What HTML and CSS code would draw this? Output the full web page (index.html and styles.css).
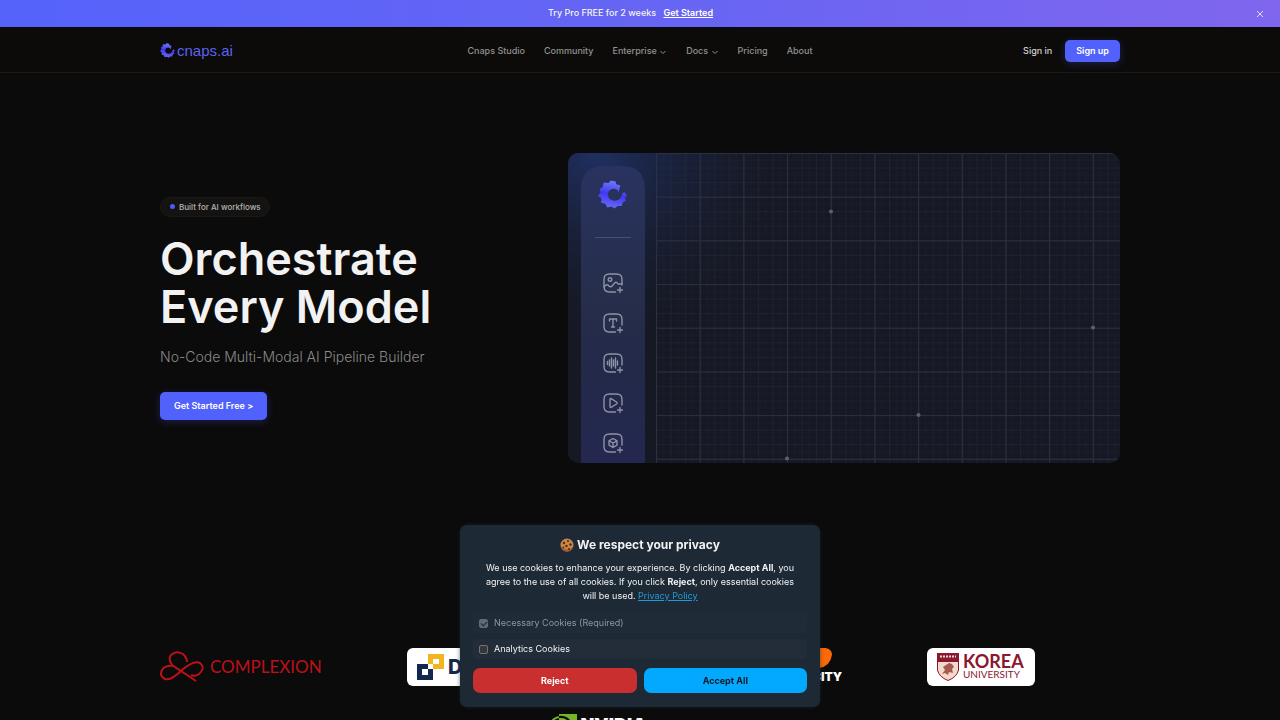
FILE: index.html
```html
<!DOCTYPE html>
<html lang="en">
<head>
    <meta charset="UTF-8">
    <meta name="viewport" content="width=device-width, initial-scale=1.0">
    <title>cnaps.ai</title>
    <link rel="stylesheet" href="styles.css">
</head>
<body>
    <!-- shared symbols -->
    <svg class="symbols" aria-hidden="true">
        <defs>
            <linearGradient id="swirl-fill" x1="0.6" y1="0" x2="0.4" y2="1">
                <stop offset="0" stop-color="#6e80f8"/>
                <stop offset="0.5" stop-color="#4038f0"/>
                <stop offset="1" stop-color="#6a6cf8"/>
            </linearGradient>
            <symbol id="swirl" viewBox="0 0 28 28">
                <path fill="url(#swirl-fill)" d="M20 12 L21.500 5 L17.500 4 L17 1.500 L12.500 .500 L10 3 L5.500 2.500 L4.500 7 L1.500 8.500 L2.500 12 L0 15 L3.500 18 L3 22 L7 23 L9 26.500 L13 25.500 L16 27.500 L19 25 L23 25 L24 21.500 L27 20 L26 17 L28 15 L25.500 11.500 L23.500 13 Q22.500 19.500 16.500 20 Q10 19.500 9.500 14 Q10 9 15 8.500 Q19 8.500 20 12 Z"/>
            </symbol>
            <symbol id="tile" viewBox="0 0 20 20">
                <path d="M19 12V6.500Q19 1 13.500 1H6.500Q1 1 1 6.500V13.500Q1 19 6.500 19H12.500M17 14.500V19.500M14.500 17H19.500"/>
            </symbol>
        </defs>
    </svg>

    <div class="banner">
        <p>Try Pro FREE for 2 weeks <a href="#">Get Started</a></p>
        <button class="banner-close" aria-label="Close">
            <svg viewBox="0 0 8 8"><path d="M1 1 7 7M7 1 1 7"/></svg>
        </button>
    </div>

    <header class="header">
        <div class="container header-inner">
            <a class="logo" href="#"><svg><use href="#swirl"/></svg>cnaps.ai</a>
            <nav class="nav">
                <a href="#">Cnaps Studio</a>
                <a href="#">Community</a>
                <a href="#">Enterprise <svg viewBox="0 0 8 8"><path d="M1.500 3 4 5.500 6.500 3"/></svg></a>
                <a href="#">Docs <svg viewBox="0 0 8 8"><path d="M1.500 3 4 5.500 6.500 3"/></svg></a>
                <a href="#">Pricing</a>
                <a href="#">About</a>
            </nav>
            <div class="account">
                <a class="sign-in" href="#">Sign in</a>
                <button class="button sign-up">Sign up</button>
            </div>
        </div>
    </header>

    <main>
        <section class="container hero">
            <div class="hero-text">
                <span class="badge">Built for AI workflows</span>
                <h1>Orchestrate<br>Every Model</h1>
                <p>No-Code Multi-Modal AI Pipeline Builder</p>
                <button class="button get-started">Get Started Free &gt;</button>
            </div>
            <svg class="studio" viewBox="0 0 552 310">
                <defs>
                    <radialGradient id="glow" gradientUnits="userSpaceOnUse" cx="30" cy="0" r="190">
                        <stop offset="0" stop-color="#203269" stop-opacity="0.9"/>
                        <stop offset="1" stop-color="#161a2a" stop-opacity="0"/>
                    </radialGradient>
                    <linearGradient id="rail" x1="0" y1="0" x2="0" y2="1">
                        <stop offset="0" stop-color="#29335f"/>
                        <stop offset="0.45" stop-color="#262e4b"/>
                        <stop offset="0.7" stop-color="#232949"/>
                        <stop offset="1" stop-color="#242850"/>
                    </linearGradient>
                    <pattern id="minor" x="88" y="0" width="14.560" height="14.560" patternUnits="userSpaceOnUse">
                        <path d="M.5 0V14.560M0 .5H14.560" stroke="#2b2f3e" stroke-opacity="0.4" fill="none"/>
                        <path d="M7.500 0V14.560M0 7.500H14.560" stroke="#2b2f3e" stroke-opacity="0.15" fill="none"/>
                    </pattern>
                    <pattern id="major" x="88" y="0" width="43.680" height="43.680" patternUnits="userSpaceOnUse">
                        <path d="M.5 0V43.680M0 .5H43.680" stroke="#2e3244" stroke-opacity="0.8" fill="none"/>
                    </pattern>
                </defs>
                <rect width="552" height="310" fill="#161924"/>
                <rect width="552" height="310" fill="url(#glow)"/>
                <rect x="88" width="464" height="310" fill="url(#minor)"/>
                <rect x="88" width="464" height="310" fill="url(#major)"/>
                <path d="M13 310V37Q13 13 36 13H54Q77 13 77 37V310Z" fill="url(#rail)"/>
                <use href="#swirl" x="30" y="27" width="29" height="29"/>
                <path d="M27 84.500H63" stroke="#475071"/>
                <g fill="none" stroke="#8d92a5" stroke-width="1.400" stroke-linecap="round" stroke-linejoin="round">
                    <svg x="35" y="120" width="20" height="20" viewBox="0 0 20 20"><use href="#tile"/><circle cx="7" cy="6.500" r="1.800"/><path d="M1 14 Q4 10 6 13 Q8 15 10 12 Q13 7 15 11 L19 11"/></svg>
                    <svg x="35" y="160" width="20" height="20" viewBox="0 0 20 20"><use href="#tile"/><path d="M6.500 8V6H13.500V8M10 6V14M8.500 14H11.500"/></svg>
                    <svg x="35" y="200" width="20" height="20" viewBox="0 0 20 20"><use href="#tile"/><path d="M4.500 8.500V11.500M6.500 7V13M8.500 5V15M10.500 7V13M12.500 5V15M14.500 8V12"/></svg>
                    <svg x="35" y="240" width="20" height="20" viewBox="0 0 20 20"><use href="#tile"/><path d="M7 6.500Q7 5 8.500 5.800L13.500 9Q14.800 10 13.500 11L8.500 14.200Q7 15 7 13.500Z"/></svg>
                    <svg x="35" y="280" width="20" height="20" viewBox="0 0 20 20"><use href="#tile"/><path d="M10 5.500 14 7.800V12.200L10 14.500 6 12.200V7.800ZM6 7.800 10 10 14 7.800M10 10V14.500"/></svg>
                </g>
                <g fill="#5c6070">
                    <circle cx="263" cy="58.500" r="2"/>
                    <circle cx="525" cy="174.500" r="2"/>
                    <circle cx="350.500" cy="262" r="2"/>
                    <circle cx="219" cy="305.500" r="2"/>
                </g>
            </svg>
        </section>

        <section class="container partners">
            <div class="partner complexion">
                <svg viewBox="0 0 44 32"><path d="M36 30 12 14Q8 8 11 4Q16-1 23 3Q27 7 27 11M22 19Q11 30 5 28Q-1 25 2 19Q5 14 14 15M22 19Q34 9 40 12Q46 17 39 23Q35 26 31 24"/></svg>
                COMPLEXION
            </div>
            <div class="partner card data">
                <svg viewBox="0 0 27 27"><path fill="#f3b51d" d="M11 0H27V15H11Z"/><path fill="#12294d" d="M0 10H16V26H0Z"/><path fill="#fff" d="M16 5H22V10H16ZM5 15H11V21H5ZM11 10H16V15H11Z"/></svg>
                D
            </div>
            <div class="partner city">
                <svg viewBox="0 0 36 24"><path fill="#fb6a05" d="M18 0Q36-2 36 8Q34 22 20 24Q8 22 4 10Z"/><circle cx="15" cy="12" r="6" fill="#d04400"/></svg>
                CITY
            </div>
            <div class="partner card korea">
                <svg viewBox="0 0 22 28"><path fill="#f3d9cc" stroke="#8c1730" d="M.5.5H21.500V17Q20 24 11 27.500Q2 24 .5 17Z"/><path fill="#8c1730" d="M0 0H22V9H0Z"/><path stroke="#efd6cd" stroke-width="2" stroke-dasharray="2 1" d="M3 3.500H19"/><path fill="#a65a50" d="M6 14 9 12 12 10 15 11 17 14 15 16 16 20 12 19 11 22 8 20 5 21 8 17Z"/></svg>
                <div><strong>KOREA</strong><span>UNIVERSITY</span></div>
            </div>
            <div class="partner nvidia">
                <svg viewBox="0 0 28 20"><path fill="#76b525" d="M10 0H28V20H10Z"/><path fill="none" stroke="#76b525" stroke-width="2" d="M10 3Q4 4 1 10Q4 16 10 18"/><path fill="none" stroke="#0a0a0a" stroke-width="2" d="M10 3Q18 2 22 9Q18 16 10 17"/></svg>
                NVIDIA
            </div>
        </section>
    </main>

    <div class="cookies" role="dialog" aria-labelledby="cookies-title">
        <h2 id="cookies-title"><svg viewBox="0 0 14 14"><circle cx="7" cy="7" r="6.500" fill="#c98645"/><path fill="#9f5e2c" d="M1 9Q7 14 13 9Q11 14 7 13.500Q3 14 1 9Z"/><g fill="#51291a"><circle cx="4" cy="5" r="1.200"/><circle cx="8" cy="3" r="1"/><circle cx="10.500" cy="6.500" r="1.200"/><circle cx="6.500" cy="8" r="1.200"/><circle cx="3.500" cy="9.500" r=".9"/><circle cx="9" cy="11" r="1"/></g></svg>We respect your privacy</h2>
        <p>We use cookies to enhance your experience. By clicking <strong>Accept All</strong>, you agree to the use of all cookies. If you click <strong>Reject</strong>, only essential cookies will be used. <a href="#">Privacy Policy</a></p>
        <label class="option disabled"><input type="checkbox" checked disabled>Necessary Cookies (Required)</label>
        <label class="option"><input type="checkbox">Analytics Cookies</label>
        <div class="cookies-actions">
            <button class="reject">Reject</button>
            <button class="accept">Accept All</button>
        </div>
    </div>
</body>
</html>
```
FILE: styles.css
```css
* {
    box-sizing: border-box;
}

body {
    margin: 0;
    background: #0b0b0b;
    color: #f2f2f2;
    font-family: Inter, sans-serif;
    font-size: 9px;
    line-height: 14px;
}

h1, h2, p {
    margin: 0;
}

button {
    border: none;
    cursor: pointer;
    font-family: inherit;
    font-size: inherit;
    line-height: inherit;
}

.symbols {
    position: absolute;
    width: 0;
    height: 0;
}

.container {
    max-width: 960px;
    margin: 0 auto;
}

/* Banner */
.banner {
    position: relative;
    height: 27px;
    padding-right: 19px;
    background: linear-gradient(90deg, #5563fb, #6665f4 50%, #8066ee);
    font-weight: 500;
    line-height: 26px;
    text-align: center;
}

.banner a {
    margin-left: 5px;
    color: #fff;
    font-weight: 600;
}

.banner-close {
    position: absolute;
    top: 8px;
    right: 14px;
    padding: 0;
    background: none;
}

.banner-close svg {
    display: block;
    width: 12px;
    height: 12px;
    padding: 2px;
    fill: none;
    stroke: #ddd9ff;
}

/* Header */
.header {
    background: #0c0b0a;
    border-bottom: 1px solid #1b1a19;
}

.header-inner {
    display: grid;
    grid-template-columns: 1fr auto 1fr;
    align-items: center;
    height: 45px;
    padding-top: 2px;
}

.header a {
    color: #92918f;
    font-weight: 500;
    text-decoration: none;
}

.header .logo {
    display: flex;
    align-items: center;
    gap: 2px;
    color: #5b63f0;
    font-family: "Liberation Sans", sans-serif;
    font-size: 15px;
    line-height: 20px;
}

.logo svg {
    width: 15px;
    height: 15px;
}

.nav {
    display: flex;
    gap: 19px;
}

.nav svg {
    width: 8px;
    height: 8px;
    vertical-align: -2px;
    fill: none;
    stroke: currentColor;
}

.account {
    display: flex;
    justify-content: flex-end;
    align-items: center;
    gap: 13px;
}

.header .sign-in {
    color: #d2d2d2;
}

.button {
    border-radius: 5px;
    background: #5161fc;
    color: #fff;
    font-weight: 600;
    box-shadow: 0 2px 8px rgba(81, 97, 252, 0.25);
}

.sign-up {
    padding: 4px 11px;
}

/* Hero */
.hero {
    display: grid;
    grid-template-columns: 2fr 3fr;
    gap: 40px;
    align-items: center;
    padding: 80px 0;
}

.badge {
    display: inline-flex;
    align-items: center;
    gap: 4px;
    height: 20px;
    padding: 0 8px 0 9px;
    border: 1px solid #1a1918;
    border-radius: 10px;
    background: #141312;
    color: #b4b3b1;
    font-size: 8px;
    font-weight: 500;
}

.badge::before {
    content: "";
    width: 5px;
    height: 5px;
    border-radius: 50%;
    background: #4a5cf8;
}

h1 {
    margin-top: 18px;
    font-size: 45px;
    font-weight: 600;
    line-height: 48px;
    white-space: nowrap;
}

.hero-text p {
    margin: 15px 0 24px;
    color: #8a8987;
    font-size: 14px;
    font-weight: 300;
    line-height: 22px;
    white-space: nowrap;
}

.get-started {
    padding: 7px 14px;
}

.studio {
    display: block;
    width: 100%;
    border-radius: 10px;
}

/* Partners */
.partners {
    display: flex;
    flex-wrap: wrap;
    justify-content: center;
    row-gap: 28px;
    padding: 105px 0 40px;
}

.partner {
    display: flex;
    align-items: center;
    height: 38px;
    margin-right: 85px;
}

.card {
    border-radius: 6px;
    background: #fff;
}

.complexion {
    gap: 6px;
    width: 162px;
    color: #bd1018;
    font-family: Lato, sans-serif;
    font-size: 17px;
}

.complexion svg {
    width: 44px;
    height: 32px;
    fill: none;
    stroke: #bd1018;
    stroke-width: 2;
}

.data {
    gap: 4px;
    width: 180px;
    padding-left: 10px;
    color: #12294d;
    font-size: 20px;
    font-weight: 800;
}

.data svg {
    width: 27px;
    height: 27px;
}

.city {
    flex-direction: column;
    align-items: flex-end;
    width: 170px;
    color: #fff;
    font-size: 12px;
    font-weight: 900;
    line-height: 18px;
}

.city svg {
    width: 36px;
    height: 24px;
    margin-right: 7px;
}

.korea {
    gap: 4px;
    width: 108px;
    padding-left: 10px;
    color: #8c1730;
    font-family: Lato, sans-serif;
}

.korea svg {
    width: 22px;
    height: 28px;
}

.korea strong,
.korea span {
    display: block;
    font-size: 10px;
    line-height: 11px;
}

.korea strong {
    font-size: 18px;
    line-height: 15px;
}

.nvidia {
    align-items: flex-start;
    gap: 4px;
    color: #fff;
    font-size: 18px;
    font-weight: 900;
    line-height: 22px;
}

.nvidia svg {
    width: 28px;
    height: 20px;
}

/* Cookie dialog */
.cookies {
    position: fixed;
    bottom: 13px;
    left: 50%;
    width: 360px;
    padding: 13px 13px 14px;
    border-radius: 7px;
    background: #1e2936;
    box-shadow: 0 0 4px rgba(30, 41, 54, 0.6);
    transform: translateX(-50%);
    text-align: center;
}

.cookies h2 {
    display: flex;
    justify-content: center;
    align-items: center;
    gap: 3px;
    font-size: 12px;
    line-height: 14px;
}

.cookies h2 svg {
    width: 14px;
    height: 14px;
}

.cookies p {
    margin: 9px 0 10px;
    padding: 0 6px;
}

.cookies a {
    color: #1f9bd8;
}

.option {
    display: flex;
    align-items: center;
    gap: 6px;
    height: 20px;
    margin-bottom: 6px;
    padding: 0 6px;
    border-radius: 3px;
    background: #232d3a;
}

.disabled {
    color: #8f959d;
    background: #202b38;
}

.option input {
    display: grid;
    place-items: center;
    width: 9px;
    height: 9px;
    margin: 0;
    border: 1px solid #77746e;
    border-radius: 2px;
    background: #34383d;
    appearance: none;
}

.option input:checked {
    border-color: #626a74;
    background: #626a74;
}

.option input:checked::before {
    content: "";
    width: 5px;
    height: 3px;
    border: solid #1e2936;
    border-width: 0 0 1px 1px;
    transform: rotate(-45deg);
}

.cookies-actions {
    display: grid;
    grid-template-columns: 1fr 1fr;
    gap: 7px;
    margin-top: 9px;
}

.cookies-actions button {
    height: 25px;
    border-radius: 7px;
    font-weight: 700;
}

.reject {
    background: #c92f2f;
    color: #fff;
}

.accept {
    background: #03a8ff;
    color: #101820;
}
```
